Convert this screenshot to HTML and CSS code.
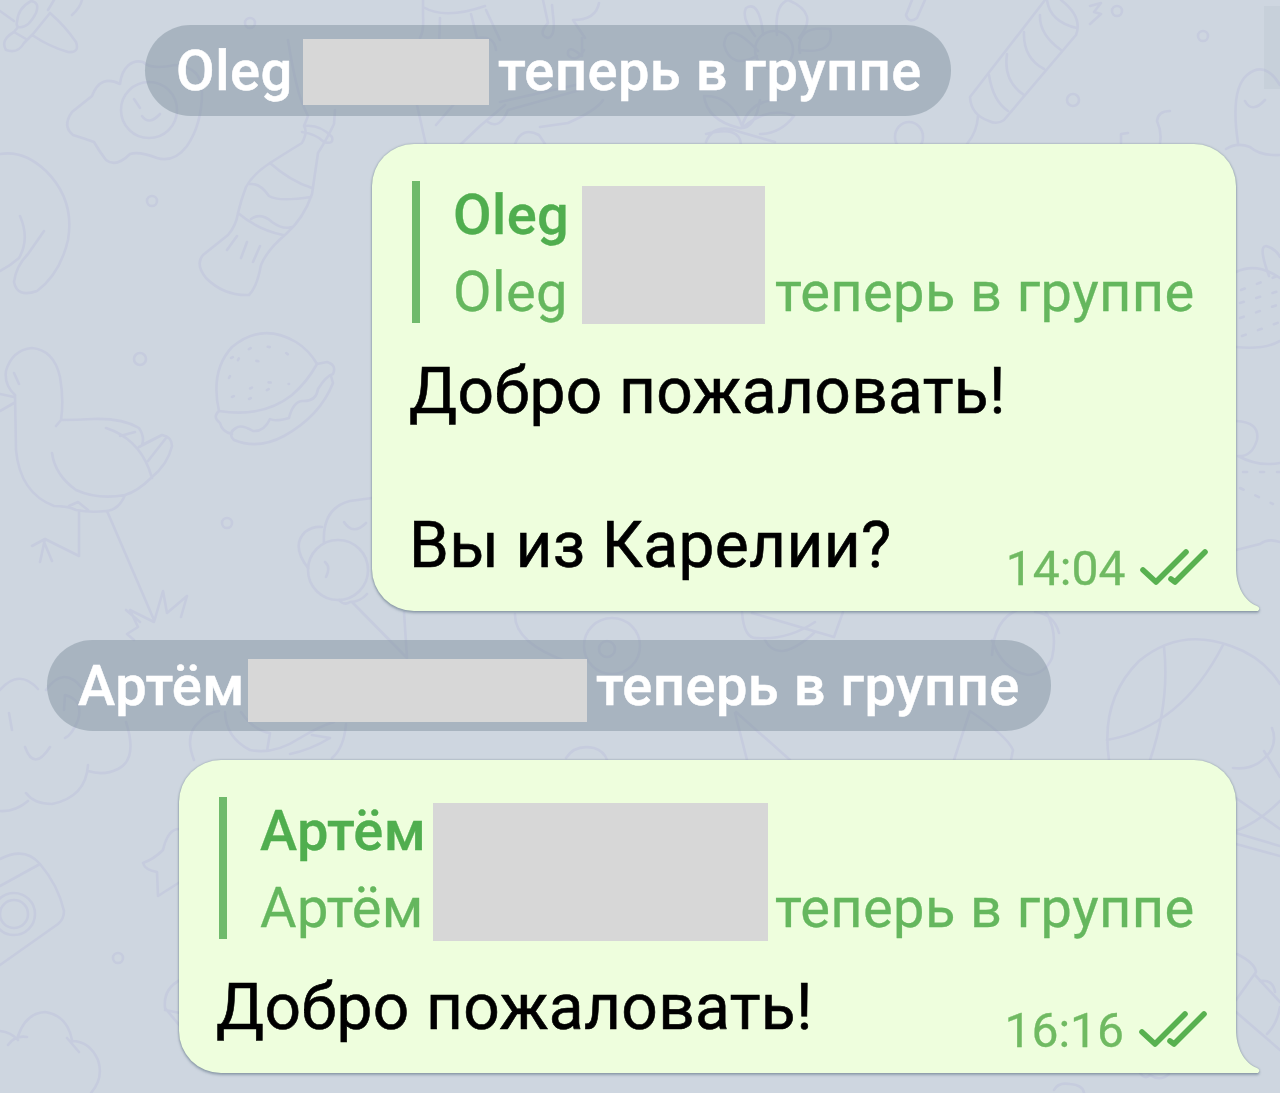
FILE: index.html
```html
<!DOCTYPE html>
<html lang="ru">
<head>
    <meta charset="UTF-8">
    <title>Чат</title>
    <link rel="stylesheet" href="styles.css">
</head>
<body>
<svg class="wallpaper" viewBox="0 0 1280 1093" aria-hidden="true">
    <!-- candy and flower -->
    <path d="M0 11L14 21M50 13Q65 26 76 42Q80 53 68 52Q50 47 32 35M33 34L50 13M54 0L48 10M82 0Q80 8 72 15M14 32Q0 40 6 50Q18 54 24 43L33 34M14 32L26 39M17 22Q18 8 31 1Q40 2 36 13Q28 29 18 27Q16 25 17 22M14 32L18 27"/>
    <!-- egg -->
    <path d="M120 84C122 67 132 59 143 62Q151 70 175 65Q202 67 202 92Q202 124 187 146Q174 163 157 158Q139 151 130 154Q116 168 106 160Q99 151 94 142Q86 139 73 135Q62 126 72 112L92 96C98 80 108 78 120 84Z"/>
    <circle cx="149" cy="110" r="28"/>
    <path d="M134 99L140 108M142 116Q149 126 160 114"/>
    <!-- bottle -->
    <path d="M288 40Q292 66 297 86Q300 100 308 116L304 126Q308 132 302 143Q284 154 270 163Q253 174 246 187Q241 200 238 213Q236 226 228 235L203 255Q195 264 206 278Q224 296 249 295Q257 287 261 265Q267 250 286 234Q304 218 312 194Q315 173 318 153Q328 137 334 124L335 110M304 126Q320 124 332 137Q334 145 324 142Q316 134 302 132M270 163Q290 181 312 188M250 184Q260 183 269 196Q278 202 311 197M238 213Q258 230 283 235M251 219Q261 212 272 222Q283 230 292 227M237 236L227 250M247 242L241 258M260 246L253 262"/>
    <!-- fruit -->
    <path d="M0 154Q24 150 46 171Q75 200 68 240Q60 274 37 291Q17 298 14 282Q16 266 28 254L44 231M20 216Q30 239 19 258Q10 266 0 271"/>
    <!-- goose -->
    <path d="M0 394L14 397M0 411L14 403M15 395Q4 385 6 371Q12 350 32 348Q54 350 60 377Q64 400 61 420Q77 420 93 419Q122 418 139 428Q145 437 142 445L162 435Q172 437 172 446Q168 464 151 478Q138 491 125 495Q119 510 106 511Q91 513 76 510Q68 506 54 506Q20 493 16 450L15 395M14 373L19 384M52 453Q55 475 76 490Q98 500 125 495M61 420L56 426M106 428Q137 438 149 469L152 478M139 447L162 435M148 461L166 438M120 436L135 432M69 506L78 502L88 510M79 511V556L45 539L32 546M45 539L40 562M44 542L52 561M107 511L154 620M154 622L130 610L138 627L127 634L134 640M154 622L163 591L167 613L187 596L181 617M126 610L140 622"/>
    <!-- burger -->
    <path d="M219 411Q210 371 232 347Q262 322 296 342Q309 350 317 364L327 362Q337 365 333 374Q326 376 318 389Q316 402 302 401Q293 402 289 418Q275 422 270 419Q264 432 253 431Q241 424 236 428Q227 433 234 440Q258 450 284 436Q320 416 333 383L331 376M219 411Q263 418 292 395Q307 382 317 364M219 411Q212 417 220 423Q222 432 232 434"/>
    <path stroke-dasharray="2 18" d="M231 358L257 345L281 349L299 363M229 378L239 358L275 364M232 397L264 382L289 384M249 399L277 385"/>
    <!-- ice cream -->
    <path d="M324 543Q322 508 350 501L372 498M308 568Q291 546 305 532Q313 526 322 527M344 522Q353 536 366 523M325 562Q331 567 326 577M339 600Q344 606 350 602Q360 602 367 594M352 602L407 658L404 612"/>
    <circle cx="338" cy="570" r="30"/>
    <!-- tree -->
    <path d="M0 690Q19 668 38 689M9 713L12 730M64 710L65 695Q84 700 78 720Q72 735 65 738M25 747Q34 772 50 747M126 722Q138 759 118 769Q104 776 88 771M88 765Q86 797 52 804Q34 804 26 793M28 801Q15 812 0 811M46 690Q64 665 82 688"/>
    <!-- camera and cloud -->
    <path d="M0 859Q25 846 40 864Q58 885 64 911Q64 919 58 924L0 965M0 886L40 864"/>
    <circle cx="14" cy="914" r="14"/>
    <circle cx="14" cy="914" r="21"/>
    <path d="M0 1031Q11 1032 18 1040M8 1045Q15 1035 27 1037M18 1036Q26 1013 45 1012Q67 1015 72 1040M67 1038L79 1052M70 1041Q89 1040 98 1060Q104 1078 91 1093"/>
    <path d="M180 829Q168 828 163 850Q154 859 143 863Q145 870 157 872L158 896L180 882M180 980Q163 989 165 1008L180 1026M165 1010L180 1013"/>
    <!-- cake and snake -->
    <path d="M194 760Q184 735 199 722Q208 712 219 711M225 712Q226 738 250 750Q274 755 300 738Q320 726 334 722M241 712Q253 730 270 733L267 751M290 754Q310 750 330 738L312 735M346 724Q344 748 332 758"/>
    <path d="M423 7Q445 20 485 6M423 0V16Q424 31 420 38M440 18L438 80M471 14L477 38Q494 35 496 50M486 10L500 40M417 105L426 145M505 105L480 126L460 145M436 125L455 103M543 0L548 23Q537 35 548 38Q556 36 553 15L552 5M599 3Q596 20 573 20L585 38M582 38V56Q567 43 568 55Q576 64 584 50M488 122Q500 130 508 110L580 90M500 102L580 84M515 144Q522 126 539 135L545 144M540 127L568 123Q597 110 603 100"/>
    <!-- flower -->
    <path d="M755 36Q741 18 746 8Q759 0 763 33M777 35Q774 5 788 0Q820 13 799 38M758 51Q727 18 724 45Q731 70 757 56M800 53Q795 25 830 29Q836 55 799 50M760 100Q755 130 739 128Q707 120 704 96Q731 95 742 126M742 126Q750 100 778 100M706 142Q714 122 740 132L775 142M706 134Q740 125 741 145M742 128Q770 105 794 116Q780 134 760 134"/>
    <circle cx="774" cy="50" r="19"/>
    <!-- cracker -->
    <path d="M912 0L906 15Q909 24 917 18L925 0M1045 0L970 97Q971 115 989 121Q997 125 1004 120L1076 35Q1083 17 1061 0M1047 0Q1050 22 1077 28M1040 15Q1039 34 1061 50M1024 32Q1023 58 1044 69M1007 54Q1003 81 1024 95M989 75Q993 101 1008 111M978 116Q977 132 967 144M1090 6L1101 3L1094 12L1101 14L1090 24M1121 143V134L1128 133M1160 143Q1162 132 1157 121Q1158 111 1170 111"/>
    <ellipse cx="909" cy="137" rx="14" ry="15"/>
    <!-- ghost -->
    <path d="M1238 143Q1230 90 1247 75Q1265 60 1280 85M1245 101Q1252 114 1265 100M1226 149Q1237 142 1250 147Q1260 156 1280 155"/>
    <!-- pineapple and animals -->
    <path d="M1236 272Q1257 262 1280 278M1236 347Q1264 350 1280 341M1269 276Q1258 246 1266 246Q1276 249 1280 257M1236 421Q1260 422 1257 440Q1252 457 1238 456Q1258 467 1280 463M1236 550L1260 544Q1268 538 1280 542"/>
    <path stroke-dasharray="4 13" d="M1241 290L1280 275M1240 303L1279 291M1240 318L1277 305M1242 336L1280 322M1243 472H1280M1240 488L1273 504"/>
    <!-- ball -->
    <path d="M1109 760Q1100 700 1139 661Q1180 627 1231 646Q1263 657 1280 684M1164 647Q1170 701 1150 760M1223 645Q1181 727 1107 740M992 655Q994 618 1020 609M1046 612Q1058 632 1052 658Q1045 674 1028 675Q1002 670 992 640M1035 612Q1054 614 1059 633M1233 768Q1256 771 1270 752Q1277 740 1272 728M1264 751L1280 777M1236 798L1280 829M1236 831Q1260 821 1280 801M1236 833L1280 846M1236 844L1280 856M1237 954Q1255 963 1256 972L1236 1000M1255 975L1280 1002M1260 981Q1273 979 1275 992M1280 1007Q1277 1024 1267 1034M1236 1012L1280 1050"/>
    <path d="M515 614Q514 643 568 662M742 612Q744 640 758 638Q788 640 815 622M752 613L834 637L843 612M765 640Q778 665 814 633M735 713L747 760M736 712L790 760M970 711L954 760M970 711Q1007 736 1013 750L1011 760M566 758Q575 744 594 748Q604 751 607 760M1054 1090Q1058 1082 1070 1084Q1083 1085 1084 1093M1140 1073Q1145 1080 1150 1075Q1160 1082 1169 1074"/>
    <circle cx="612" cy="646" r="28"/>
    <circle cx="607" cy="649" r="8"/>
    <!-- bubbles -->
    <circle cx="250" cy="23" r="5"/>
    <circle cx="152" cy="201" r="5"/>
    <circle cx="140" cy="359" r="6"/>
    <circle cx="227" cy="523" r="5"/>
    <circle cx="118" cy="958" r="5"/>
    <circle cx="1117" cy="11" r="5"/>
    <circle cx="1203" cy="36" r="5"/>
    <circle cx="1073" cy="100" r="6"/>
</svg>
<div class="scrollbar"></div>

<!-- shared shapes -->
<svg class="defs" aria-hidden="true">
    <symbol id="tail" viewBox="0 0 26 44">
        <path d="M0 0H2C2 19 10 34 23 39Q27 41 24 44H0Z"/>
    </symbol>
    <symbol id="checks" viewBox="0 0 68 38">
        <path d="M3 22L16 34L46 4M31 31L35 34L65 4"/>
    </symbol>
</svg>

<main class="chat">
    <div class="service service-oleg">
        <span class="who">Oleg</span>
        <span class="hidden-name"></span>
        <span class="joined">теперь в группе</span>
    </div>

    <div class="bubble bubble-oleg">
        <div class="quote">
            <b class="quote-name">Oleg</b>
            <span class="hidden-name"></span>
            <span class="quote-who">Oleg</span>
            <span class="quote-joined">теперь в группе</span>
        </div>
        <div class="message">
            <p class="text">Добро пожаловать!<br><br>Вы из Карелии?</p>
            <div class="meta">
                <time>14:04</time>
                <svg class="checks"><use href="#checks"/></svg>
            </div>
        </div>
        <svg class="tail"><use href="#tail"/></svg>
    </div>

    <div class="service service-artem">
        <span class="who">Артём</span>
        <span class="hidden-name"></span>
        <span class="joined">теперь в группе</span>
    </div>

    <div class="bubble bubble-artem">
        <div class="quote">
            <b class="quote-name">Артём</b>
            <span class="hidden-name"></span>
            <span class="quote-who">Артём</span>
            <span class="quote-joined">теперь в группе</span>
        </div>
        <div class="message">
            <p class="text">Добро пожаловать!</p>
            <div class="meta">
                <time>16:16</time>
                <svg class="checks"><use href="#checks"/></svg>
            </div>
        </div>
        <svg class="tail"><use href="#tail"/></svg>
    </div>
</main>
</body>
</html>
```
FILE: styles.css
```css
* {
  margin: 0;
  padding: 0;
  box-sizing: border-box;
}
body {
  position: relative;
  height: 1093px;
  overflow: hidden;
  background-color: #ced6e0;
  font-family: Roboto, "Liberation Sans", sans-serif;
}
.wallpaper {
  position: absolute;
  top: 0;
  left: 0;
  width: 1280px;
  height: 1093px;
  fill: none;
  stroke: #c6ccde;
  stroke-width: 2.6;
  stroke-linecap: round;
  stroke-linejoin: round;
}
.scrollbar {
  position: absolute;
  top: 6px;
  right: 0;
  width: 16px;
  height: 83px;
  background-color: rgba(150, 165, 180, .12);
}
.defs {
  position: absolute;
  width: 0;
  height: 0;
}
.chat {
  position: relative;
  display: flex;
  flex-direction: column;
  padding: 25px 44px 0 47px;
}
.hidden-name {
  background-color: #d7d7d7;
}

/* service messages */
.service {
  display: flex;
  align-items: flex-start;
  height: 91px;
  border-radius: 46px;
  background-color: rgba(122, 139, 153, .45);
  color: #fff;
  font-size: 56px;
  font-weight: 500;
  letter-spacing: .55px;
  line-height: 92px;
  white-space: nowrap;
  -webkit-text-stroke: .5px #fff;
}
.service-oleg {
  width: 806px;
  margin-left: 98px;
  padding-left: 31px;
}
.service-artem {
  width: 1004px;
  padding-left: 31px;
}
.service .who {
  flex: none;
}
.service-oleg .who {
  width: 127px;
}
.service-artem .who {
  width: 170px;
}
.service .hidden-name {
  flex: none;
  margin-right: 9px;
}
.service-oleg .hidden-name {
  width: 186px;
  height: 66px;
  margin-top: 14px;
}
.service-artem .hidden-name {
  width: 339px;
  height: 63px;
  margin-top: 19px;
}

/* outgoing messages */
.bubble {
  position: relative;
  align-self: flex-end;
  padding: 33px 29px 12px 37px;
  border-radius: 42px 42px 0 42px;
  background-color: #eefedd;
  filter: drop-shadow(0 0 1px rgba(90, 110, 120, .5)) drop-shadow(0 2px 1px rgba(90, 110, 130, .45));
}
.bubble-oleg {
  width: 864px;
  height: 467px;
  margin: 28px 0 29px;
}
.bubble-artem {
  width: 1057px;
  height: 313px;
  margin-top: 29px;
}
.tail {
  position: absolute;
  right: -24px;
  bottom: 0;
  width: 26px;
  height: 44px;
  fill: #eefedd;
}
.quote {
  display: grid;
  grid-template-rows: 77px 77px;
  position: relative;
  margin-bottom: 22px;
  padding-left: 44px;
  color: #65b75e;
  font-size: 56px;
  letter-spacing: .4px;
  line-height: 77px;
  white-space: nowrap;
  -webkit-text-stroke: .3px;
}
.quote::before {
  content: "";
  position: absolute;
  top: 4px;
  left: 3px;
  width: 8px;
  height: 142px;
  background-color: #6fba6b;
}
.bubble-oleg .quote {
  grid-template-columns: 129px 183px 1fr;
}
.bubble-artem .quote {
  grid-template-columns: 173px 335px 1fr;
}
.quote-name {
  grid-area: 1 / 1;
  color: #50ae4f;
  font-weight: 500;
}
.quote-who {
  grid-area: 2 / 1;
}
.quote .hidden-name {
  grid-area: 1 / 2 / 3 / 3;
  height: 138px;
  margin-top: 9px;
}
.bubble-artem .hidden-name {
  margin-top: 10px;
}
.quote-joined {
  grid-area: 2 / 3;
  padding-left: 10px;
}
.bubble-artem .quote-joined {
  padding-left: 7px;
}
.message {
  display: flex;
  align-items: flex-end;
  justify-content: space-between;
}
.text {
  margin-bottom: 15px;
  color: #000;
  font-size: 64px;
  letter-spacing: .35px;
  line-height: 77px;
  white-space: nowrap;
  -webkit-text-stroke: .6px #000;
}
.meta {
  display: flex;
  gap: 15px;
  margin-bottom: 6px;
  color: #70ba62;
  font-size: 48px;
  line-height: 48px;
  -webkit-text-stroke: .3px;
}
.checks {
  width: 68px;
  height: 38px;
  margin-top: 3px;
  fill: none;
  stroke: #58b150;
  stroke-width: 5.6;
  stroke-linecap: round;
  stroke-linejoin: round;
}
```
